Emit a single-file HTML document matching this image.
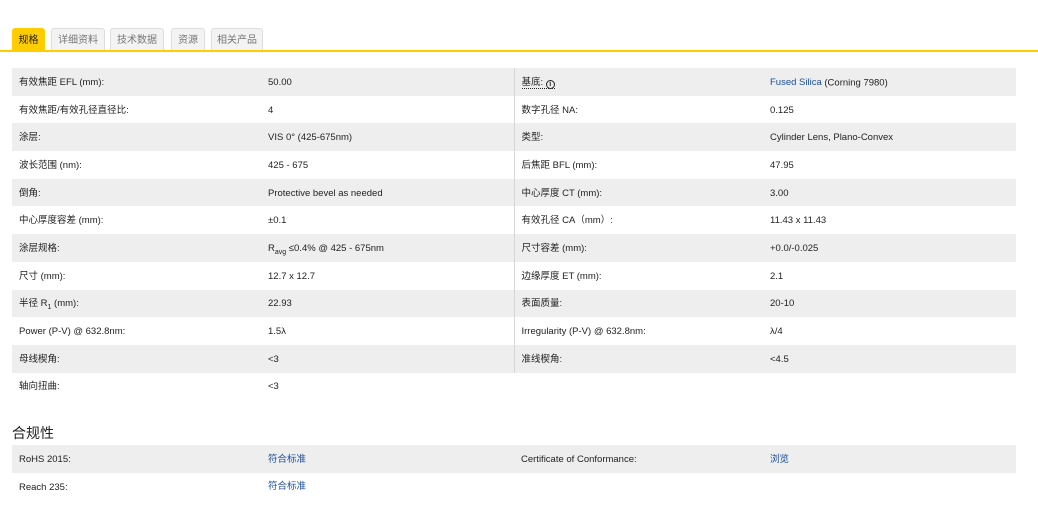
<!DOCTYPE html>
<html><head><meta charset="utf-8"><style>
body{margin:0;width:1038px;height:528px;background:#fff;font-family:"Liberation Sans","Noto Sans CJK SC",sans-serif;font-size:9.5px;color:#222;position:relative;overflow:hidden}
.tab{position:absolute;top:28px;height:22px;line-height:24px;text-align:center;border:1px solid #ddd;border-bottom:none;background:#f3f3f3;color:#777;border-radius:3px 3px 0 0;font-size:10px;box-sizing:border-box}
.tab.a{background:#ffcc00;color:#222;border-color:#ffcc00}
.line{position:absolute;left:0;top:50px;width:1038px;height:2px;background:#ffcc00}
table{position:absolute;left:12px;border-collapse:collapse;width:1004px;table-layout:fixed}
tr{height:27.7px}
td{height:27.7px;padding:2px 0 0 7px;vertical-align:middle;white-space:nowrap;line-height:12px;box-sizing:border-box;overflow:hidden}
td span,td a{vertical-align:middle}
tr:nth-child(odd) td{background:#eeeeee}
td.l{width:249px}td.v{width:253px}td.r{width:249px;border-left:1px solid #d6d6d6}
a{color:#1a4d9a;text-decoration:none}
sub{font-size:7px;line-height:0}
h3{position:absolute;left:12px;top:423px;margin:0;font-size:14px;font-weight:normal;color:#222}
.i{display:inline-block;width:9px;height:9px;border:1.5px solid #222;border-radius:50%;box-sizing:border-box;font-size:7px;line-height:7px;text-align:center;font-weight:bold;vertical-align:-1px}
</style></head><body>
<div class="tab a" style="left:12px;width:33px">规格</div>
<div class="tab" style="left:51px;width:54px">详细资料</div>
<div class="tab" style="left:110px;width:54px">技术数据</div>
<div class="tab" style="left:171px;width:34px">资源</div>
<div class="tab" style="left:211px;width:52px">相关产品</div>
<div class="line"></div>
<table style="top:68px">
<tr><td class="l">有效焦距 EFL (mm):</td><td class="v">50.00</td><td class="r"><span style="border-bottom:1px dotted #222">基底: <span class="i">i</span></span></td><td><a>Fused Silica</a> (Corning 7980)</td></tr>
<tr><td class="l">有效焦距/有效孔径直径比:</td><td class="v">4</td><td class="r">数字孔径 NA:</td><td>0.125</td></tr>
<tr><td class="l">涂层:</td><td class="v">VIS 0° (425-675nm)</td><td class="r">类型:</td><td>Cylinder Lens, Plano-Convex</td></tr>
<tr><td class="l">波长范围 (nm):</td><td class="v">425 - 675</td><td class="r">后焦距 BFL (mm):</td><td>47.95</td></tr>
<tr><td class="l">倒角:</td><td class="v">Protective bevel as needed</td><td class="r">中心厚度 CT (mm):</td><td>3.00</td></tr>
<tr><td class="l">中心厚度容差 (mm):</td><td class="v">±0.1</td><td class="r">有效孔径 CA（mm）:</td><td>11.43 x 11.43</td></tr>
<tr><td class="l">涂层规格:</td><td class="v">R<sub>avg</sub> ≤0.4% @ 425 - 675nm</td><td class="r">尺寸容差 (mm):</td><td>+0.0/-0.025</td></tr>
<tr><td class="l">尺寸 (mm):</td><td class="v">12.7 x 12.7</td><td class="r">边缘厚度 ET (mm):</td><td>2.1</td></tr>
<tr><td class="l">半径 R<sub>1</sub> (mm):</td><td class="v">22.93</td><td class="r">表面质量:</td><td>20-10</td></tr>
<tr><td class="l">Power (P-V) @ 632.8nm:</td><td class="v">1.5λ</td><td class="r">Irregularity (P-V) @ 632.8nm:</td><td>λ/4</td></tr>
<tr><td class="l">母线楔角:</td><td class="v">&lt;3</td><td class="r">准线楔角:</td><td>&lt;4.5</td></tr>
<tr><td class="l" style="background:#fff">轴向扭曲:</td><td class="v" style="background:#fff">&lt;3</td><td class="r" style="background:#fff;border-left:none"></td><td style="background:#fff"></td></tr>
</table>
<h3>合规性</h3>
<table style="top:445px">
<tr><td class="l">RoHS 2015:</td><td class="v"><a>符合标准</a></td><td class="r" style="border-left:none">Certificate of Conformance:</td><td><a>浏览</a></td></tr>
<tr><td class="l">Reach 235:</td><td class="v"><a>符合标准</a></td><td class="r" style="border-left:none"></td><td></td></tr>
</table>
</body></html>
